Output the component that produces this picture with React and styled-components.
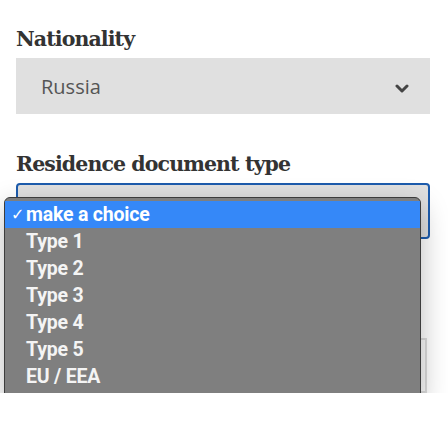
import React from 'react'
import styled, { createGlobalStyle } from 'styled-components'

const GlobalStyle = createGlobalStyle`
    html, body {
        margin: 0;
        padding: 0;
        background: #ffffff;
    }
    body {
        font-family: "Open Sans", "Liberation Sans", sans-serif;
    }
`

const Page = styled.div`
    padding: 27px 18px 0 16px;
    display: flex;
    flex-direction: column;
    gap: 38px;
`

const Field = styled.div`
    position: relative;
    display: flex;
    flex-direction: column;
    gap: 6px;
`

const Label = styled.label`
    font-family: "DejaVu Serif", "Liberation Serif", serif;
    font-weight: bold;
    font-size: 20.5px;
    line-height: 25px;
    color: #333333;
    letter-spacing: -0.9px;
`

const SelectBox = styled.div`
    box-sizing: border-box;
    height: 56px;
    display: flex;
    align-items: center;
    justify-content: space-between;
    padding: 0 21px 0 25px;
    background: #e0e0e0;
    border: ${props => props.$focused ? '2px solid #1d5cad' : 'none'};
    border-radius: ${props => props.$focused ? '4px' : '0'};
    font-size: 20px;
    color: #555555;
`

const Chevron = styled.svg`
    width: 14px;
    height: 9px;
    margin-top: 4px;
`

const TextInput = styled.div`
    box-sizing: border-box;
    height: 55px;
    margin: 61px 3px 0 0;
    border: 2px solid #dcdcdc;
    background: #fafafa;
`

const Menu = styled.div`
    position: absolute;
    top: ${props => props.$top}px;
    left: -12px;
    width: 417px;
    box-sizing: border-box;
    padding: 3px 0 8px;
    background: #7f7f7f;
    border: 1px solid #3c3c3c;
    border-radius: 6px;
    box-shadow: 0 10px 28px rgba(0, 0, 0, 0.28);
    font-family: Roboto, "Liberation Sans", Arial, sans-serif;
    font-weight: bold;
    font-size: 19.5px;
    letter-spacing: -0.2px;
    z-index: 10;
`

const Option = styled.div`
    display: flex;
    align-items: center;
    height: 27px;
    padding-left: 4px;
    background: ${props => props.$active ? '#3588f8' : 'transparent'};
    color: ${props => props.$active ? '#ffffff' : '#f4f4f4'};
`

const Check = styled.span`
    width: 17px;
    font-size: 16px;
    font-weight: normal;
    text-align: center;
    font-family: "DejaVu Sans", sans-serif;
`

const options = ['make a choice', 'Type 1', 'Type 2', 'Type 3', 'Type 4', 'Type 5', 'EU / EEA']

function App() {
    return (
        <>
            <GlobalStyle />
            <Page>
                <Field>
                    <Label>Nationality</Label>
                    <SelectBox>
                        <span>Russia</span>
                        <Chevron viewBox="0 0 14 9">
                            <polyline points="2,2 7,7 12,2" fill="none" stroke="#444444" strokeWidth="3" strokeLinecap="round" strokeLinejoin="round" />
                        </Chevron>
                    </SelectBox>
                </Field>
                <Field>
                    <Label>Residence document type</Label>
                    <SelectBox $focused />
                    <Menu $top={45}>
                        {options.map((opt, i) => (
                            <Option key={opt} $active={i === 0}>
                                <Check>{i === 0 ? '✓' : ''}</Check>
                                {opt}
                            </Option>
                        ))}
                    </Menu>
                </Field>
                <Field>
                    <TextInput />
                </Field>
            </Page>
        </>
    )
}

export default App
